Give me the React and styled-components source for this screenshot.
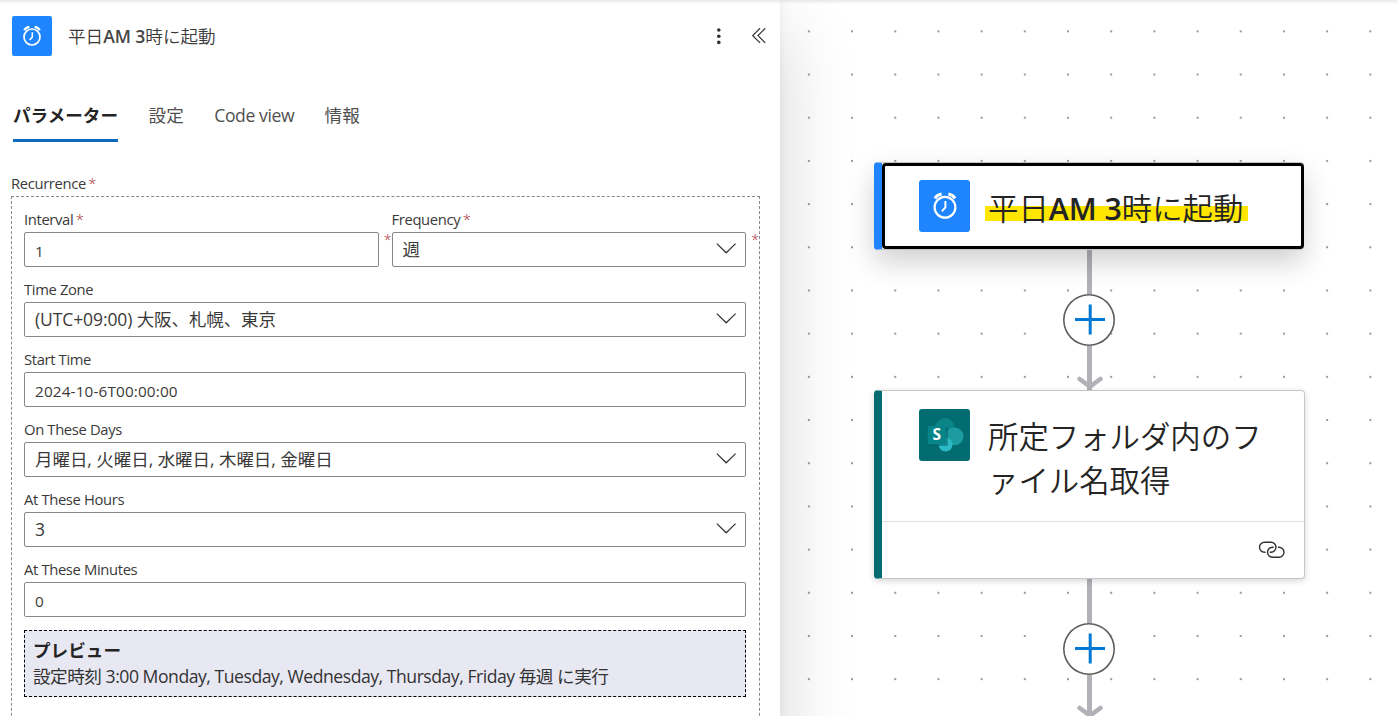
import React from 'react';
import styled, { createGlobalStyle, css } from 'styled-components';

const GlobalStyle = createGlobalStyle`
	* { box-sizing: border-box; }
	body {
		margin: 0;
		overflow: hidden;
		background: #fff;
		font-family: "Open Sans", "Noto Sans CJK JP", sans-serif;
		color: #3b3a39;
	}
`;

const tabs = [
	{ id: 1, name: 'パラメーター', active: true },
	{ id: 2, name: '設定' },
	{ id: 3, name: 'Code view', spacing: -0.42 },
	{ id: 4, name: '情報' },
];

const fields = [
	{ id: 1, label: 'Time Zone', value: '(UTC+09:00) 大阪、札幌、東京', select: true, spacing: -0.1 },
	{ id: 2, label: 'Start Time', value: '2024-10-6T00:00:00', spacing: 0.15 },
	{ id: 3, label: 'On These Days', value: '月曜日, 火曜日, 水曜日, 木曜日, 金曜日', select: true, spacing: -0.05 },
	{ id: 4, label: 'At These Hours', value: '3', select: true },
	{ id: 5, label: 'At These Minutes', value: '0' },
];

const ClockIcon = ({ size }) => (
	<svg width={size} height={size} viewBox="0 0 40 40" fill="none" stroke="#fff">
		<circle cx="20" cy="21" r="8" strokeWidth="1.7" />
		<path d="M20.3 16.2v4.9l-2.7 3" strokeWidth="1.5" />
		<path d="M12.3 14.2c.8-1.6 2.7-3 5.1-3.4M27.7 14.2c-.8-1.6-2.7-3-5.1-3.4" strokeWidth="2.3" />
	</svg>
);

const SharePointIcon = ({ size }) => (
	<svg width={size} height={size} viewBox="0 0 52 52">
		<circle cx="26" cy="18.9" r="9.9" fill="#0b8487" />
		<circle cx="35.6" cy="27.4" r="8.9" fill="#1c9ba0" />
		<circle cx="26.6" cy="35.6" r="7" fill="#2cb9c6" />
		<rect x="10" y="18" width="19" height="19" rx="1.5" fill="#035458" opacity="0.45" />
		<rect x="8.8" y="17" width="18" height="18.4" rx="1.6" fill="#078488" />
		<text x="17.8" y="31.4" fill="#fff" fontSize="15.5" fontWeight="700" textAnchor="middle">S</text>
	</svg>
);

const ChevronIcon = () => (
	<svg width="20" height="12" viewBox="0 0 20 12" fill="none" stroke="#323130" strokeWidth="1.2">
		<path d="M.8 .6 10.2 9.8 19.6 .6" />
	</svg>
);

const CollapseIcon = () => (
	<svg width="14" height="16" viewBox="0 0 14 16" fill="none" stroke="#323130" strokeWidth="1.2">
		<path d="M8 .3.8 7.6 8 14.9M13.2.3 6 7.6l7.2 7.3" />
	</svg>
);

const MoreIcon = () => (
	<svg width="4" height="17" viewBox="0 0 4 17" fill="#323130">
		<circle cx="1.8" cy="2" r="1.8" />
		<circle cx="1.8" cy="8.2" r="1.8" />
		<circle cx="1.8" cy="14.4" r="1.8" />
	</svg>
);

const LinkIcon = () => (
	<svg width="28" height="18" viewBox="0 0 28 18" fill="none" stroke="#323130" strokeWidth="1.4">
		<path d="M7.5 11.2h-1a5 5 0 0 1 0-10h6.5a5 5 0 0 1 0 10h-1.2" />
		<path d="M20 6.2h1a5 5 0 0 1 0 10h-6.5a5 5 0 0 1 0-10h1.2" />
	</svg>
);

const PlusIcon = () => (
	<svg width="32" height="32" viewBox="0 0 32 32" stroke="#0078d4" strokeWidth="3">
		<path d="M2 15.6h30M17.2 .6v30" />
	</svg>
);

const ArrowHead = () => (
	<svg width="28" height="14" viewBox="0 0 28 14" fill="none" stroke="#b3b1b8" strokeWidth="4.6" strokeLinecap="round" strokeLinejoin="round">
		<path d="M3.6 3 14 10.6 24.4 3" />
	</svg>
);

const Connector = () => (
	<ConnectorColumn>
		<Line />
		<AddButton><PlusIcon /></AddButton>
		<Line><ArrowHead /></Line>
	</ConnectorColumn>
);

const Field = ({ label, value, select, required, spacing }) => (
	<FieldBlock>
		<Label>{label}{required && <Required> *</Required>}</Label>
		<Control $select={select} $spacing={spacing}>
			<span>{value}</span>
			{select && <ChevronIcon />}
			{required && <OuterStar>*</OuterStar>}
		</Control>
	</FieldBlock>
);

export default function App() {
	return (
		<Wrapper>
			<GlobalStyle />
			<Panel>
				<Header>
					<HeaderIcon><ClockIcon size={40} /></HeaderIcon>
					<HeaderTitle>平日<HeaderStrong>AM 3</HeaderStrong>時に起動</HeaderTitle>
					<MoreIcon />
					<CollapseIcon />
				</Header>
				<Tabs>
					{tabs.map(tab => (
						<Tab key={tab.id} $active={tab.active} $spacing={tab.spacing}>{tab.name}</Tab>
					))}
				</Tabs>
				<GroupLabel>Recurrence<Required> *</Required></GroupLabel>
				<Group>
					<FieldRow>
						<Field label="Interval" value="1" required />
						<Field label="Frequency" value="週" select required />
					</FieldRow>
					{fields.map(field => <Field key={field.id} {...field} />)}
					<Preview>
						<PreviewTitle>プレビュー</PreviewTitle>
						<PreviewText>設定時刻 3:00 Monday, Tuesday, Wednesday, Thursday, Friday 毎週 に実行</PreviewText>
					</Preview>
				</Group>
			</Panel>
			<Canvas>
				<Node $color="#1f85ff" $selected>
					<NodeHead>
						<NodeIcon $color="#1f85ff"><ClockIcon size={52} /></NodeIcon>
						<NodeTitle $selected><Mark>平日<Strong>AM 3</Strong>時に起動</Mark></NodeTitle>
					</NodeHead>
				</Node>
				<Connector />
				<Node $color="#036c70">
					<NodeHead $tall>
						<NodeIcon $color="#036c70"><SharePointIcon size={52} /></NodeIcon>
						<NodeTitle>所定フォルダ内のファイル名取得</NodeTitle>
					</NodeHead>
					<NodeFoot><LinkIcon /></NodeFoot>
				</Node>
				<Connector />
			</Canvas>
			<TopShade />
		</Wrapper>
	)
}

const Wrapper = styled.div`
	position: relative;
	display: flex;
	height: 716px;
	overflow: hidden;
`;
const TopShade = styled.div`
	position: absolute;
	top: 0;
	left: 0;
	right: 0;
	height: 4px;
	z-index: 3;
	background: linear-gradient(rgba(0,0,0,0.09), rgba(0,0,0,0));
`;
const Panel = styled.div`
	position: relative;
	z-index: 2;
	flex: none;
	width: 780px;
	height: 800px;
	padding: 16px 20px 0 11px;
	background: #fff;
	box-shadow: 0 28px 70px rgba(0,0,0,0.17), 0 0 9px rgba(0,0,0,0.06);
`;
const Header = styled.div`
	display: flex;
	align-items: center;
	height: 40px;
	margin: 0 -6px 0 1px;
	gap: 31px;
`;
const HeaderIcon = styled.div`
	width: 40px;
	height: 40px;
	border-radius: 2px;
	background: #1f85ff;
`;
const Strong = styled.span`
	font-weight: 600;
	letter-spacing: -0.1px;
`;
const HeaderStrong = styled(Strong)`
	color: #484644;
`;
const HeaderTitle = styled.div`
	flex: 1;
	margin-left: -15px;
	padding-bottom: 2px;
	font-size: 17.6px;
	font-weight: 350;
	white-space: nowrap;
`;
const Tabs = styled.div`
	display: flex;
	gap: 30.5px;
	margin: 40px 0 0 2px;
	height: 46px;
`;
const Tab = styled.div`
	height: 46px;
	font-size: 17.6px;
	line-height: 38px;
	font-weight: ${({ $active }) => ($active ? 700 : 400)};
	color: ${({ $active }) => ($active ? '#242424' : '#505050')};
	letter-spacing: ${({ $spacing }) => $spacing || 0}px;
	white-space: nowrap;
	${({ $active }) => $active && css`
		border-bottom: 3px solid #0f6cbd;
	`}
`;
const Label = styled.div`
	height: 20px;
	font-size: 14.8px;
	line-height: 18px;
	letter-spacing: -0.36px;
	white-space: nowrap;
`;
const GroupLabel = styled(Label)`
	margin-top: 32px;
`;
const Required = styled.span`
	margin-left: -1px;
	font-weight: 300;
	color: #a4262c;
`;
const Group = styled.div`
	display: flex;
	flex-direction: column;
	gap: 13px;
	height: 560px;
	margin-top: 2px;
	padding: 13px 13px 0 12px;
	border: 1px dashed #8a8886;
`;
const FieldRow = styled.div`
	display: grid;
	grid-template-columns: 1fr 1fr;
	gap: 13px;
`;
const FieldBlock = styled.div`
	height: 57px;
`;
const Control = styled.div`
	position: relative;
	display: flex;
	align-items: center;
	justify-content: space-between;
	height: 35px;
	margin-top: 2px;
	padding: ${({ $select }) => ($select ? '0 9px 2px 10px' : '3px 10px 0')};
	border: 1px solid #8a8886;
	border-radius: 2px;
	font-size: ${({ $select }) => ($select ? '17.5px' : '15.3px')};
	letter-spacing: ${({ $spacing }) => $spacing || 0}px;
	white-space: nowrap;
`;
const OuterStar = styled.span`
	position: absolute;
	top: -3px;
	right: -14px;
	font-size: 14px;
	font-weight: 300;
	line-height: 20px;
	color: #a4262c;
`;
const Preview = styled.div`
	height: 67px;
	padding: 6px 8px 0;
	border: 1px dashed #000;
	background: #e8e8f3;
	font-size: 17.6px;
	line-height: 26px;
	color: #333;
`;
const PreviewTitle = styled.div`
	font-weight: 700;
	color: #242424;
`;
const PreviewText = styled.div`
	letter-spacing: -0.47px;
	white-space: nowrap;
`;
const Canvas = styled.div`
	flex: 1;
	padding: 162px 0 0 94px;
	background: radial-gradient(circle at 8px 10px, #999 0.9px, transparent 1.4px) 21px 21.5px / 43.2px 43.2px #fff;
`;
const Node = styled.div`
	position: relative;
	width: ${({ $selected }) => ($selected ? 430 : 431)}px;
	border: 1px solid #c8c6c4;
	border-left: 8px solid ${({ $color }) => $color};
	border-radius: 4px;
	background: #fff;
	box-shadow: 0 2px 6px rgba(0,0,0,0.16);
	${({ $selected }) => $selected && css`
		box-shadow: 0 12px 28px rgba(0,0,0,0.19);
		&::after {
			content: '';
			position: absolute;
			inset: 0 -1px 0 0;
			border: 3px solid #000;
			border-radius: 4px;
		}
	`}
`;
const NodeHead = styled.div`
	display: flex;
	align-items: flex-start;
	gap: 17px;
	padding: ${({ $tall }) => ($tall ? '18px 36px 18px 37px' : '17px 36px 17px 37px')};
`;
const NodeIcon = styled.div`
	flex: none;
	width: 51px;
	height: 52px;
	border-radius: 3px;
	background: ${({ $color }) => $color};
	svg { display: block; }
`;
const NodeTitle = styled.div`
	margin-top: ${({ $selected }) => ($selected ? 7 : 6)}px;
	padding-left: 1px;
	font-size: 30.4px;
	line-height: 44px;
	font-weight: 350;
	color: #242424;
	line-break: anywhere;
`;
const Mark = styled.span`
	margin-left: -3px;
	padding: 0 5px 0 3px;
	background: linear-gradient(#ffe600, #ffe600) 0 18px / 100% 15px no-repeat;
	white-space: nowrap;
`;
const NodeFoot = styled.div`
	display: flex;
	align-items: center;
	justify-content: flex-end;
	height: 57px;
	padding-right: 18px;
	border-top: 1px solid #e1dfdd;
`;
const ConnectorColumn = styled.div`
	display: flex;
	flex-direction: column;
	align-items: center;
	width: 430px;
	height: 140px;
`;
const Line = styled.div`
	display: flex;
	flex: 1;
	align-items: flex-end;
	justify-content: center;
	width: 5px;
	margin-left: 1px;
	background: #b3b1b8;
	svg { flex: none; }
`;
const AddButton = styled.div`
	display: flex;
	align-items: center;
	justify-content: center;
	width: 52px;
	height: 52px;
	border-radius: 50%;
	background: #fff;
	box-shadow: inset 0 0 0 1.6px #605e5c;
`;
